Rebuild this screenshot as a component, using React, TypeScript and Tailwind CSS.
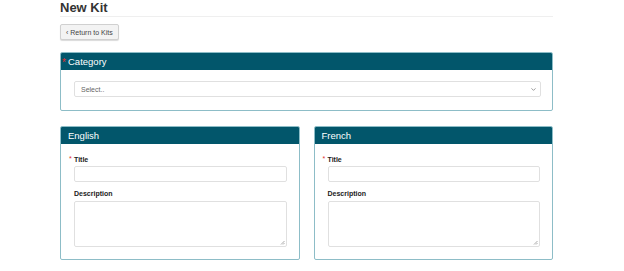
import { ChevronDown } from 'lucide-react'

const font = { fontFamily: '"Liberation Sans", Arial, sans-serif' }

function Panel({ title, required, children }: { title: string; required?: boolean; children: React.ReactNode }) {
  return (
    <div className="border border-[#8dbdc7] rounded-[2px] bg-white overflow-hidden">
      <div className="h-[17px] bg-[#02566b] flex items-center pl-[1px] pr-2">
        <span className="w-[6px] text-[#e03131] text-[10px] leading-none mt-[2px]">{required ? '*' : ''}</span>
        <span className="text-white text-[9.5px] leading-none">{title}</span>
      </div>
      {children}
    </div>
  )
}

function LangPanel({ title }: { title: string }) {
  return (
    <Panel title={title}>
      <div className="pl-[13px] pr-[12px] pt-[10px] pb-[12px]">
        <div className="relative h-[10px] flex items-center">
          <span className="absolute -left-[5px] top-[1px] text-[#e03131] text-[7px] leading-none">*</span>
          <span className="text-[7px] font-bold text-[#222] leading-none">Title</span>
        </div>
        <div className="mt-[2px] h-[16px] border border-[#e0e0e0] rounded-[2px]" />
        <div className="mt-[6px] h-[10px] flex items-center">
          <span className="text-[7px] font-bold text-[#222] leading-none">Description</span>
        </div>
        <div className="relative mt-[3px] h-[46px] border border-[#e0e0e0] rounded-[2px]">
          <svg className="absolute right-[1px] bottom-[1px]" width="5" height="5" viewBox="0 0 5 5">
            <path d="M4.5 1 L1 4.5 M4.5 3 L3 4.5" stroke="#888" strokeWidth="0.7" />
          </svg>
        </div>
      </div>
    </Panel>
  )
}

export default function App() {
  return (
    <div className="w-[624px] h-[271px] bg-white pl-[60px]" style={font}>
      <div className="w-[493px]">
        {/* HEADER */}
        <div className="pt-[1px] pb-[1px] border-b border-[#efefef]">
          <h1 className="text-[13px] font-bold text-[#333] leading-[14px]">New Kit</h1>
        </div>

        <button className="mt-[7px] h-[16px] px-[5px] bg-[#f3f3f3] border border-[#d0d0d0] rounded-[2px] shadow-[0_1px_1px_rgba(0,0,0,0.15)] text-[7px] text-[#444] leading-none flex items-center">
          ‹ Return to Kits
        </button>

        {/* CATEGORY */}
        <div className="mt-[12px]">
          <Panel title="Category" required>
            <div className="pl-[13px] pr-[11px] pt-[11px] pb-[13px]">
              <div className="h-[16px] border border-[#e0e0e0] rounded-[2px] flex items-center justify-between pl-[6px] pr-[3px]">
                <span className="text-[7px] text-[#666] leading-none">Select..</span>
                <ChevronDown size={7} strokeWidth={2.5} className="text-[#777]" />
              </div>
            </div>
          </Panel>
        </div>

        {/* LANGUAGES */}
        <div className="mt-[15px] grid grid-cols-2 gap-[14px]">
          <LangPanel title="English" />
          <LangPanel title="French" />
        </div>
      </div>
    </div>
  )
}
